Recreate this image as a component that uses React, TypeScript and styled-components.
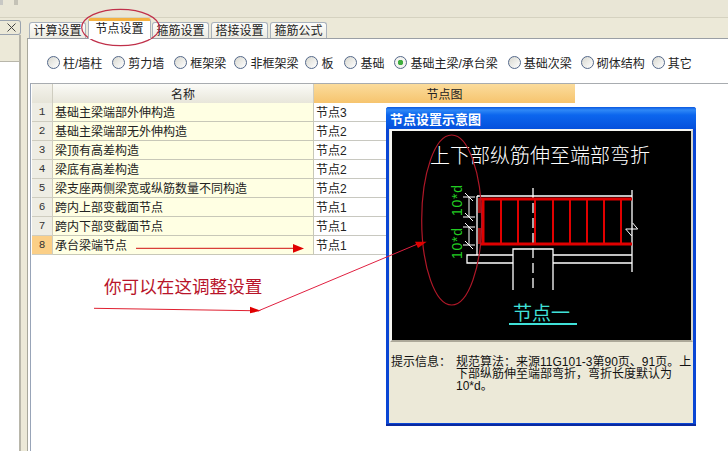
import React from "react";
import styled, { createGlobalStyle } from "styled-components";

const Global = createGlobalStyle`
  html, body { margin: 0; padding: 0; background: #fff; }
  #root { width: 728px; height: 451px; }
`;
const cjk = `"Liberation Sans", "Noto Sans CJK SC", sans-serif`;

const Page = styled.div`
  position: relative; width: 728px; height: 451px; overflow: hidden;
  display: flex; flex-direction: column; background: #ece9d8;
  font: 12px ${cjk}; color: #111;
`;
const TopBar = styled.div`
  height: 17px; flex: none; background: #e9e6d6; border-bottom: 1px solid #d5d2c0;
  display: flex; align-items: flex-start;
`;
const Grip = styled.div`
  width: 26px; height: 5px; background: linear-gradient(90deg,#c8c8c4 0 3px,#e9e6d6 3px 14px,#c4c2b6 14px 18px,#e9e6d6 18px);
`;
const Body = styled.div`flex: 1; display: flex; min-height: 0;`;
const Side = styled.div`width: 21px; flex: none; display: flex; flex-direction: column; padding-top: 2px;`;
const SideHead = styled.div`
  height: 13px; flex: none; box-sizing: content-box; border: 1px solid #9aa3ae; border-left: none; border-radius: 0 3px 3px 0;
  background: #ece9d8; display: flex; align-items: center; justify-content: flex-end; padding-right: 4px;
`;
const SideGap = styled.div`height: 26px; flex: none; border-right: 2px solid #b8b6aa;`;
const SideList = styled.div`flex: 1; background: #fff; border-top: 1px solid #b8b6aa; border-right: 2px solid #b8b6aa;`;
const Main = styled.div`flex: 1; display: flex; flex-direction: column; padding: 3px 0 0 6px; min-width: 0;`;
const Tabs = styled.div`height: 17px; flex: none; display: flex; align-items: flex-end; padding-left: 2px; gap: 2px;`;
const Tab = styled.div<{ $on?: boolean }>`
  height: ${p => (p.$on ? 21 : 16)}px; width: ${p => (p.$on ? 63 : 57)}px; flex: none; box-sizing: border-box;
  border: 1px solid #a9b2bd; border-bottom: none; border-radius: 3px 3px 0 0; text-align: center;
  background: ${p => (p.$on ? "#fff" : "linear-gradient(#fdfdfb,#ecebe2)")};
  ${p => p.$on && "border-top: 3px solid #f5b13f; position: relative; z-index: 1; margin: 0 -1px -1px 0;"}
  font-size: 12px; line-height: ${p => (p.$on ? 16 : 17)}px; white-space: nowrap; color: #222;
`;
const Panel = styled.div`
  flex: 1; background: #fff; border-left: 1px solid #a8a89c; border-top: 1px solid #9a9fa5;
  display: flex; flex-direction: column; padding: 0 0 0 2px; min-height: 0;
`;
const Radios = styled.div`
  height: 44px; flex: none; display: flex; align-items: center; padding: 2px 0 0 17px; box-sizing: border-box;
`;
const RadioItem = styled.label<{ $gap: number }>`
  display: flex; align-items: center; gap: 3px; margin-right: ${p => p.$gap}px;
  font-size: 12px; color: #222; white-space: nowrap;
`;
const RadioDot = styled.span<{ $on?: boolean }>`
  width: 11px; height: 11px; border-radius: 50%; border: 1px solid #54688a;
  background: ${p => (p.$on ? "radial-gradient(circle,#3fae3f 0 2.5px,#f4f4f0 3px)" : "linear-gradient(135deg,#d8d8d0,#fff)")};
  flex: none;
`;
const TableView = styled.div`
  flex: 1; border-top: 1px solid #a8acb0; border-left: 1px solid #98a4b8; padding-left: 1px;
`;
const Table = styled.div`
  width: 543px; display: grid; grid-template-columns: 21px 261px 261px; grid-auto-rows: 19px;
`;
const Corner = styled.div`background: linear-gradient(#f4f3ec,#e6e4d8); border-right: 1px solid #cfcdc0;`;
const HeadName = styled.div`
  background: linear-gradient(#fbfbf7,#e8e6da); text-align: center; line-height: 22px; border-right: 1px solid #cfcdc0; color: #222;
`;
const HeadNode = styled.div`background: linear-gradient(#fbdc9c,#f6c46e); text-align: center; line-height: 22px; color: #222;`;
const Index = styled.div<{ $on?: boolean }>`
  background: ${p => (p.$on ? "#fbcf87" : "#eeede4")}; border-right: 1px solid #cfcdc0; border-bottom: 1px solid #cfcdc0;
  text-align: center; font: 11px/19px "Liberation Mono", monospace; color: #333;
`;
const NameCell = styled.div`
  background: #ffffe3; border-right: 1px solid #c8c8b8; border-bottom: 1px solid #c8c8b8;
  padding-left: 2px; line-height: 20px; color: #222; white-space: nowrap; font-size: 12px;
`;
const NodeCell = styled.div`
  background: #fff; border-bottom: 1px solid #c8c8c0; padding-left: 2px; line-height: 20px; color: #222; font-size: 12px;
`;

const Dialog = styled.div`
  position: absolute; left: 386px; top: 107px; width: 310px; height: 319px; box-sizing: border-box;
  background: #0a46d4; border-radius: 3px 3px 0 0;
  padding: 0 3px 3px 3px; display: flex; flex-direction: column; box-shadow: inset 0 -2px 0 #0a2aa0;
`;
const DialogTitle = styled.div`
  height: 22px; flex: none; margin: 0 -3px; padding-left: 4px; border-radius: 3px 3px 0 0;
  background: linear-gradient(#0a58e0 0, #2f88f6 3px, #0c66ee 8px, #0550dc 100%);
  color: #fff; font-weight: 700; font-size: 13px; line-height: 25px;
`;
const DialogBody = styled.div`flex: 1; background: #ece9d8; display: flex; flex-direction: column;`;
const Canvas = styled.div`
  height: 213px; flex: none; box-sizing: border-box; margin-left: 1px; background: #000; overflow: hidden;
  border-style: solid; border-width: 2px 2px 2px 2px; border-color: #f6f6f2 #d8d6c8 #aca899 #f6f6f2;
`;
const Hint = styled.div`
  display: flex; padding: 14px 0 0 2px; font-size: 12px; line-height: 12px; color: #111;
`;
const HintLabel = styled.div`width: 65px; flex: none;`;
const HintText = styled.div`flex: 1;`;

const Overlay = styled.svg`position: absolute; left: 0; top: 0; pointer-events: none;`;
const Note = styled.div`
  position: absolute; left: 104px; top: 276px; font-size: 17.6px; line-height: 22px; color: #b8142a; white-space: nowrap;
`;

const tabs = ["计算设置", "节点设置", "箍筋设置", "搭接设置", "箍筋公式"];
const radios: [string, number][] = [
  ["柱/墙柱", 10], ["剪力墙", 10], ["框架梁", 8], ["非框架梁", 7], ["板", 11], ["基础", 10],
  ["基础主梁/承台梁", 10], ["基础次梁", 9], ["砌体结构", 7], ["其它", 0],
];
const rows: [string, string][] = [
  ["基础主梁端部外伸构造", "节点3"],
  ["基础主梁端部无外伸构造", "节点2"],
  ["梁顶有高差构造", "节点2"],
  ["梁底有高差构造", "节点2"],
  ["梁支座两侧梁宽或纵筋数量不同构造", "节点2"],
  ["跨内上部变截面节点", "节点1"],
  ["跨内下部变截面节点", "节点1"],
  ["承台梁端节点", "节点1"],
];

function Drawing() {
  // coordinates are relative to the black canvas (page x-392, y-131)
  const stirrups = [109, 126, 143, 161, 178, 195, 212, 229];
  const cad = `"Noto Sans CJK SC", sans-serif`;
  return (
    <svg width="299" height="209" viewBox="0 0 299 209" style={{ display: "block" }}>
      <text x="38" y="32" fill="#fff" fontSize="20" fontFamily={cad} fontWeight="300">上下部纵筋伸至端部弯折</text>
      <g stroke="#fff" strokeWidth="1.3" fill="none">
        <path d="M85 65H240M240 59V141M85 65V124" />
        <path d="M121 159V118H161V159" />
        <path d="M121 124H75V132H121M161 124H240M161 132H240" />
        <path d="M141 57V161" strokeDasharray="10 5" />
      </g>
      <g stroke="#fff" strokeWidth="1" fill="none">
        <path d="M77 66V86M77 96V114M71 66H83M71 86H83M71 96H83M71 114H83" />
        <path d="M73 62l8 8M73 82l8 8M73 92l8 8M73 110l8 8" />
        <path d="M240.7 92L245.7 98H233.7L239.7 105" />
      </g>
      <g stroke="#e00000" fill="none">
        <path d="M88 68H240M88 113H240" strokeWidth="3" />
        <path d="M91 68V113" strokeWidth="3" />
        <path d="M87.5 67V82M87.5 97V113" strokeWidth="3" stroke="#a01010" />
        {stirrups.map(x => <path key={x} d={`M${x} 68V113`} strokeWidth="2" />)}
      </g>
      <text transform="translate(70 85) rotate(-90)" fill="#22cc22" fontSize="14" textLength="31" fontFamily={`"Liberation Sans", sans-serif`}>10*d</text>
      <text transform="translate(70 128) rotate(-90)" fill="#22cc22" fontSize="14" textLength="31" fontFamily={`"Liberation Sans", sans-serif`}>10*d</text>
      <text x="121" y="189" fill="#40e0d8" fontSize="19" fontFamily={cad}>节点一</text>
      <path d="M117 193H185" stroke="#40e0d8" strokeWidth="2" />
    </svg>
  );
}

export default function App() {
  return (
    <Page>
      <Global />
      <TopBar><Grip /></TopBar>
      <Body>
        <Side>
          <SideHead>
            <svg width="9" height="9" viewBox="0 0 9 9"><path d="M0.5 0.5L8.5 8.5M8.5 0.5L0.5 8.5" stroke="#444" strokeWidth="1" /></svg>
          </SideHead>
          <SideGap />
          <SideList />
        </Side>
        <Main>
          <Tabs>
            {tabs.map((t, i) => <Tab key={t} $on={i === 1}>{t}</Tab>)}
          </Tabs>
          <Panel>
            <Radios>
              {radios.map(([r, g], i) => (
                <RadioItem key={r} $gap={g}><RadioDot $on={i === 6} />{r}</RadioItem>
              ))}
            </Radios>
            <TableView>
              <Table>
                <Corner />
                <HeadName>名称</HeadName>
                <HeadNode>节点图</HeadNode>
                {rows.map(([n, v], i) => (
                  <React.Fragment key={n}>
                    <Index $on={i === 7}>{i + 1}</Index>
                    <NameCell>{n}</NameCell>
                    <NodeCell>{v}</NodeCell>
                  </React.Fragment>
                ))}
              </Table>
            </TableView>
          </Panel>
        </Main>
      </Body>
      <Dialog>
        <DialogTitle>节点设置示意图</DialogTitle>
        <DialogBody>
          <Canvas><Drawing /></Canvas>
          <Hint>
            <HintLabel>提示信息：</HintLabel>
            <HintText>规范算法：来源11G101-3第90页、91页。上下部纵筋伸至端部弯折，弯折长度默认为10*d。</HintText>
          </Hint>
        </DialogBody>
      </Dialog>
      <Note>你可以在这调整设置</Note>
      <Overlay width="728" height="451" viewBox="0 0 728 451">
        <ellipse cx="120.5" cy="27.5" rx="38.8" ry="18.2" fill="none" stroke="#c0304a" strokeWidth="1.2" />
        <ellipse cx="451.7" cy="220" rx="30" ry="85" fill="none" stroke="#b01828" strokeWidth="1.2" />
        <path d="M136 248.3H294" stroke="#d01010" strokeWidth="1" />
        <path d="M293 244L304 248.5L293 252.7Z" fill="#e00000" />
        <path d="M94 308.3L252 310.7" stroke="#e02030" strokeWidth="1" />
        <path d="M250 306.7L261 310.7L250 313.3Z" fill="#e00000" />
        <path d="M258 311L420 243" stroke="#e02040" strokeWidth="1" />
        <path d="M426.7 241.7L415 241.7L418 248Z" fill="#e00000" />
      </Overlay>
    </Page>
  );
}
